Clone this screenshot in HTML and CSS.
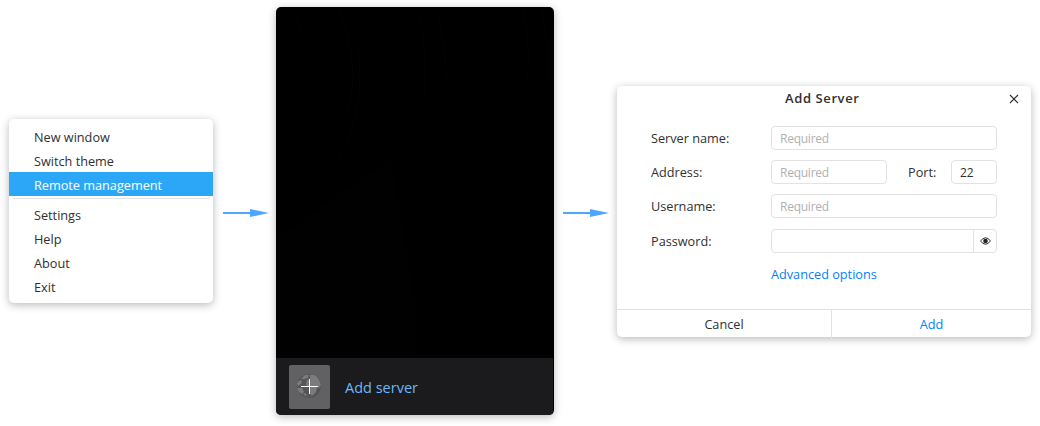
FILE: index.html
```html
<!DOCTYPE html>
<html lang="en">
<head>
<meta charset="utf-8">
<title>Add Server</title>
<link rel="stylesheet" href="styles.css">
</head>
<body>
<main class="flow">
  <nav class="menu">
    <a class="menu-item">New window</a>
    <a class="menu-item">Switch theme</a>
    <a class="menu-item active">Remote management</a>
    <hr class="menu-separator">
    <a class="menu-item">Settings</a>
    <a class="menu-item">Help</a>
    <a class="menu-item">About</a>
    <a class="menu-item">Exit</a>
  </nav>
  <svg class="arrow" width="46" height="8" viewBox="0 0 46 8"><path d="M0 3h27V0l19 4-19 4V5H0z" fill="#4da6ff"/></svg>
  <section class="panel">
    <svg class="backdrop" width="278" height="351" viewBox="0 0 278 351" fill="none">
      <path d="M0 230L115 152l24 140v59H0z" fill="#010102"/>
      <path d="M15 2q8 12 10 22M63 3q22 55 9 102M81 35q11 60-19 120M142 3q10 42 6 88M161 3q12 50 8 88M247 3q8 40 4 72M266 3q8 40 6 72" stroke="#040403"/>
    </svg>
    <div class="server-row">
      <span class="tile">
        <svg width="41" height="44" viewBox="0 0 41 44">
          <circle cx="20" cy="21" r="12" fill="#555557"/>
          <path d="M21 10q6-1 9 5l2 5-2 3-2-1-1 5-4 4-3-4 1-5-4-2 1-5 3-1zM12 14l4-4 4 0-1 3-4 1zM8 18l3-3 2 1-1 3-3 2zM8 23l5 0 2 4-2 2-3-2zM16 28l2 2-1 1-3-2z" fill="#7b7b7d"/>
          <path d="M12 21.500h17M20.500 14v15" stroke="#fff"/>
        </svg>
      </span>
      <span class="server-label">Add server</span>
    </div>
  </section>
  <svg class="arrow" width="46" height="8" viewBox="0 0 46 8"><path d="M0 3h27V0l19 4-19 4V5H0z" fill="#4da6ff"/></svg>
  <section class="dialog">
    <header class="dialog-header">
      <h1 class="title">Add Server</h1>
      <svg class="close" width="10" height="10" viewBox="0 0 10 10"><path d="M1 1l8 8M9 1L1 9" stroke="#303030" stroke-width="1.100"/></svg>
    </header>
    <div class="form">
      <div class="row"><span class="label">Server name:</span><span class="field">Required</span></div>
      <div class="row"><span class="label">Address:</span><span class="field">Required</span><span class="port-label">Port:</span><span class="field port">22</span></div>
      <div class="row"><span class="label">Username:</span><span class="field">Required</span></div>
      <div class="row password"><span class="label">Password:</span><span class="field secret"><span class="reveal"><svg width="11" height="8" viewBox="0 0 11 8"><path d="M.5 4Q5.500-2.500 10.500 4 5.500 10.500.5 4z" fill="#fff" stroke="#303030"/><circle cx="5.500" cy="4" r="2.300" fill="#222"/></svg></span></span></div>
      <a class="advanced">Advanced options</a>
    </div>
    <footer class="actions"><span class="action">Cancel</span><span class="action primary">Add</span></footer>
  </section>
</main>
</body>
</html>
```
FILE: styles.css
```css
* { box-sizing: border-box; }
body {
  margin: 0;
  background: #fff;
  color: #303030;
  font: 12.7px/24px "Open Sans", "Noto Sans", sans-serif;
  letter-spacing: 0;
  overflow: hidden;
}
svg { display: block; }
.flow {
  display: flex;
  align-items: center;
  gap: 9px;
  height: 426px;
  padding-left: 9px;
}
.menu, .panel, .dialog {
  flex: none;
  border-radius: 5px;
  background: #fff;
  box-shadow: 0 2px 8px rgba(0, 0, 0, .28);
}
.menu {
  width: 204px;
  height: 184px;
  margin: 0 1px 4px 0;
  padding-top: 5px;
}
.menu-item {
  display: block;
  height: 24px;
  padding: 2px 0 0 25px;
  line-height: 23px;
}
.menu-item.active { background: #2ca7f8; color: #fff; }
.menu-separator {
  height: 1px;
  margin: 2px 3px 3px 4px;
  border: 0;
  background: #e3e3e3;
}
.arrow { flex: none; }
.panel {
  width: 278px;
  height: 408px;
  margin: 0 0 4px -2px;
  background: #000001;
  overflow: hidden;
}
.server-row {
  display: flex;
  align-items: center;
  gap: 15px;
  height: 57px;
  margin-right: 1px;
  padding-left: 13px;
  background: #1b1b1d;
}
.tile {
  width: 41px;
  height: 44px;
  border-radius: 2px;
  background: #616163;
}
.server-label { padding-top: 2px; color: #6db8f8; font-size: 14.5px; }
.dialog {
  display: flex;
  flex-direction: column;
  width: 414px;
  height: 251px;
  margin: -3px 0 0 -1px;
}
.dialog-header {
  display: flex;
  align-items: center;
  height: 26px;
  padding: 0 12px 0 168px;
}
.title { margin: 0; padding-bottom: 2px; font-size: 13px; font-weight: 600; letter-spacing: .6px; line-height: 24px; }
.close { margin-left: auto; }
.form { flex: 1; padding: 14px 34px 0; }
.row { display: flex; height: 24px; margin-bottom: 10px; }
.row.password { margin: 11px 0 9px; }
.label { width: 120px; }
.field {
  flex: 1;
  padding-left: 8px;
  border: 1px solid #e2e2e2;
  border-radius: 4px;
  color: #b0b0b0;
  font-size: 12px;
  letter-spacing: -.25px;
}
.port-label { width: 64px; padding-left: 21px; }
.port { flex: 0 0 46px; color: #303030; letter-spacing: 0; }
.secret { display: flex; justify-content: flex-end; }
.reveal {
  display: flex;
  align-items: center;
  justify-content: center;
  width: 23px;
  border-left: 1px solid #e2e2e2;
}
.advanced { display: block; margin-left: 120px; color: #0082fa; }
.actions { display: grid; grid-template-columns: 214px 1fr; height: 28px; border-top: 1px solid #e2e2e2; }
.action { text-align: center; line-height: 29px; }
.primary { border-left: 1px solid #e2e2e2; color: #0082fa; }
```
